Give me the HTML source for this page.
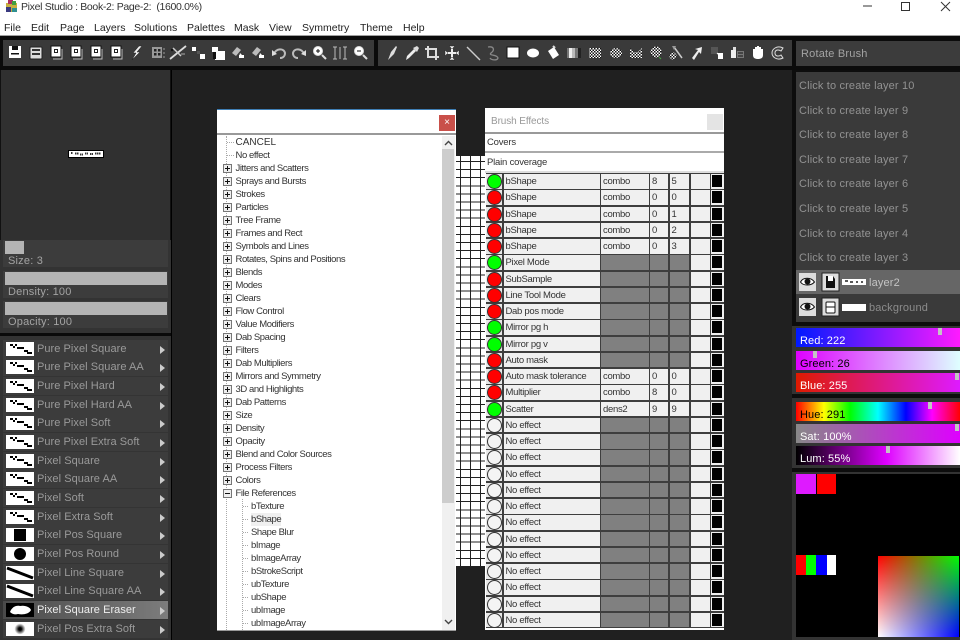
<!DOCTYPE html>
<html><head><meta charset="utf-8"><title>Pixel Studio</title>
<style>
html,body{margin:0;padding:0;background:#000}
body{width:960px;height:640px;position:relative;overflow:hidden;font-family:"Liberation Sans",sans-serif;font-size:12px;filter:blur(.3px)}
.a{position:absolute}
.t{position:absolute;white-space:pre;line-height:14px}
.menu span{position:absolute;top:20.500px;font-size:10.500px;line-height:14px;color:#222;white-space:pre}
.sl{position:absolute;left:5px;width:162px;height:13px;background:#b4b4b4}
.tr{position:absolute;left:3px;width:165px;height:27px;background:#3c3c3c}
.lb{position:absolute;left:8px;color:#a3a3a3;font-size:11px;line-height:14px;letter-spacing:.2px;white-space:pre}
.bl{position:absolute;left:3px;width:165px;height:18px;background:#3c3c3c;border-bottom:1px solid #343434;box-sizing:content-box;color:#9a9a9a;line-height:18px;white-space:pre;font-size:11px}
.bl em{font-style:normal;position:absolute;left:34px;top:0;letter-spacing:.05px}
.bl svg{position:absolute;left:3px;top:2px}
.bl i{position:absolute;left:157px;top:6px;width:0;height:0;border-left:5px solid #ccc;border-top:4.500px solid transparent;border-bottom:4.500px solid transparent}
.bl.on{background:linear-gradient(90deg,#4a4a4a,#7c7c7c)}
.bl.on em{color:#eee}
.tree{position:absolute;left:0;top:26px;width:225px;font-size:9.500px;letter-spacing:-.42px;color:#333}
.tree div{position:absolute;height:13px;line-height:13px;white-space:pre}
.tree .p{left:18.500px}
.tree .c{left:34px}
.tree .b{position:absolute;width:7px;height:7px;border:1px solid #777;left:5.500px;background:#eee;box-sizing:content-box}
.tree .b:before{content:"";position:absolute;left:1px;top:3px;width:5px;height:1px;background:#111}
.tree .b.x:after{content:"";position:absolute;left:3px;top:1px;width:1px;height:5px;background:#111}
.r{height:16.260px;position:relative;background:#3e3e3e}
.r span{position:absolute;top:1px;height:14.600px;background:#f0f0f0;font-size:9.500px;letter-spacing:-.3px;line-height:16px;color:#333;white-space:pre;text-indent:2px}
.r .d{left:0;width:16px;background:#e8e8e8}
.r .d:before{content:"";position:absolute;left:1px;top:0;width:13px;height:13px;border-radius:50%;border:1px solid #333;background:#f4f4f4}
.r.G .d:before{background:#0f0}
.r.R .d:before{background:#f00}
.r .n{left:17.500px;width:96px}
.r .m{left:115px;width:47.500px}
.r .v1{left:164px;width:17.500px}
.r .v2{left:183.500px;width:19.500px}
.r .bk{left:204.500px;width:19px}
.r .sw{left:225px;width:13px;background:#f0f0f0}
.r .sw:before{content:"";position:absolute;left:1px;top:1px;width:10px;height:12px;background:#000}
.r .y{background:#808080}
.ly{position:absolute;left:799px;color:#929292;font-size:11px;line-height:14px;letter-spacing:.15px;white-space:pre}
.bar{position:absolute;left:796px;width:164px;height:19px;line-height:24px;color:#fff;white-space:pre}
.bar em{font-style:normal;position:absolute;left:4px;top:0;font-size:11px;line-height:26px;letter-spacing:.1px}
.bar i{position:absolute;top:0;width:4px;height:7px;background:#c4c4c4}
</style></head><body>

<!-- title + menu -->
<div class="a" style="left:0;top:0;width:960px;height:35px;background:#fff"></div>
<svg class="a" style="left:4px;top:0" width="15" height="13" viewBox="0 0 15 13">
<rect x="2" y="3" width="11" height="9" fill="#c8b040"/><rect x="4" y="0" width="5" height="4" fill="#b03060"/><rect x="8" y="1" width="4" height="4" fill="#40a040"/><rect x="2" y="7" width="5" height="5" fill="#3a3a80"/><rect x="8" y="8" width="5" height="4" fill="#309090"/></svg>
<div class="t" style="left:21px;top:0;color:#333;font-size:10.500px;letter-spacing:-.33px">Pixel Studio : Book-2: Page-2:  (1600.0%)</div>
<div class="menu">
<span style="left:4px">File</span><span style="left:31px">Edit</span><span style="left:60px">Page</span><span style="left:94px">Layers</span><span style="left:134px">Solutions</span><span style="left:187px">Palettes</span><span style="left:234px">Mask</span><span style="left:269px">View</span><span style="left:302px">Symmetry</span><span style="left:360px">Theme</span><span style="left:403px">Help</span>
</div>
<svg class="a" style="left:860px;top:0" width="100" height="14"><path d="M3 6H12" stroke="#333" stroke-width="1"/><rect x="41.500" y="2.500" width="8" height="8" fill="none" stroke="#333"/><path d="M81 2L90 11M90 2L81 11" stroke="#333" fill="none"/></svg>
<div class="a" style="left:0;top:35px;width:960px;height:1px;background:#a0a0a0"></div>

<!-- toolbars -->
<div class="a" style="left:0;top:36px;width:960px;height:34px;background:#0b0b0b"></div>
<div class="a" style="left:3px;top:40px;width:371px;height:26px;background:#3a3a3a"></div>
<div class="a" style="left:378px;top:40px;width:414px;height:26px;background:#3a3a3a"></div>
<div class="a" style="left:796px;top:41px;width:164px;height:25px;background:#3c3c3c"></div>
<div class="t" style="left:801px;top:47px;color:#a3a3a3;font-size:11px;letter-spacing:.2px">Rotate Brush</div>

<svg class="a" style="left:0;top:36px" width="792" height="34" viewBox="0 36 792 34">
<defs>
<pattern id="ck" width="3" height="3" patternUnits="userSpaceOnUse"><rect width="3" height="3" fill="#fff"/><rect width="1.500" height="1.500" fill="#111"/><rect x="1.500" y="1.500" width="1.500" height="1.500" fill="#111"/></pattern>
<g id="pg"><rect x="-5" y="-6" width="10" height="11" fill="#fff" stroke="#111"/><path d="M6 -3V7H-3" fill="none" stroke="#bbb"/><rect x="-2" y="-3" width="4" height="4" fill="#222"/><rect x="-1" y="-2" width="2" height="2" fill="#fff"/></g>
<g id="ar"><path d="M-6 1L-1-5L3-2L-2 4Z" fill="#bbb"/><path d="M2 1L6 5H1Z" fill="#fff"/><rect x="1" y="3" width="5" height="3" fill="#fff"/></g>
</defs>
<!-- group 1 -->
<g transform="translate(15,52)"><rect x="-6" y="-6" width="12" height="12" fill="#fff"/><rect x="-3" y="-6" width="6" height="4" fill="#111"/><rect x="-4" y="1" width="8" height="1.500" fill="#111"/></g>
<g transform="translate(36,53)"><rect x="-6" y="-6" width="12" height="12" rx="1" fill="#ddd" stroke="#222"/><path d="M-4-3H4M-4 1H4" stroke="#333" stroke-width="2"/></g>
<use href="#pg" x="56" y="52"/><use href="#pg" x="76" y="52"/><use href="#pg" x="96" y="52"/><use href="#pg" x="116" y="52"/>
<g transform="translate(136,53)"><path d="M3-7L-3 0H0L-4 7L4-1H1L6-7Z" fill="#eee" stroke="#222" stroke-width=".5"/></g>
<g transform="translate(157,53)"><rect x="-5" y="-6" width="10" height="11" fill="#999"/><rect x="-3" y="-4" width="2.500" height="2.500" fill="#222"/><rect x="1" y="-4" width="2.500" height="2.500" fill="#222"/><rect x="-3" y="0" width="2.500" height="2.500" fill="#222"/><rect x="1" y="0" width="2.500" height="2.500" fill="#222"/><path d="M6-4H8M6 0H8M6 4H8" stroke="#999"/></g>
<g transform="translate(178,53)"><path d="M-8 6L8-7" stroke="#ddd" stroke-width="1.800"/><path d="M-5-5L3 3" stroke="#ccc" stroke-width="1.500"/><path d="M3 1L7 1" stroke="#aaa"/><circle cx="-6" cy="-3" r="1.200" fill="#111"/></g>
<g transform="translate(198,52)"><rect x="-6" y="-5" width="4" height="4" fill="#fff"/><rect x="-1" y="-1" width="3" height="3" fill="#555"/><rect x="2" y="2" width="5" height="5" fill="#fff"/></g>
<g transform="translate(218,53)"><rect x="-6" y="-6" width="6" height="5" fill="#fff"/><rect x="-3" y="-2" width="10" height="9" fill="#fff"/><rect x="-5" y="-1" width="3" height="7" fill="#111"/></g>
<use href="#ar" x="238" y="52"/><use href="#ar" x="258" y="52"/>
<g transform="translate(279,53)"><path d="M-5 1C-3-5 5-5 6 0C6 3 4 5 1 5" fill="none" stroke="#bbb" stroke-width="2"/><path d="M-7-3L-2 1L-7 3Z" fill="#ddd"/></g>
<g transform="translate(299,53)"><path d="M5 1C3-5-5-5-6 0C-6 3-4 5-1 5" fill="none" stroke="#bbb" stroke-width="2"/><path d="M7-3L2 1L7 3Z" fill="#ddd"/></g>
<g transform="translate(319,52)"><circle cx="-1" cy="-1" r="4.500" fill="#fff" stroke="#ddd"/><path d="M-3-1H1M-1-3V1" stroke="#111"/><path d="M3 3L7 7" stroke="#ddd" stroke-width="2"/></g>
<g transform="translate(340,53)"><path d="M-5-6V6M0-6V6M5-6V6M-7-6H-3M-7 6H-3M3-6H7M3 6H7" stroke="#bbb" fill="none"/></g>
<g transform="translate(360,52)"><circle cx="-1" cy="-1" r="4.500" fill="#fff" stroke="#ddd"/><path d="M-3-1H1" stroke="#111"/><path d="M3 3L7 7" stroke="#ddd" stroke-width="2"/></g>
<!-- group 2 -->
<g transform="translate(392,53)"><path d="M-4 7L-1-1L4-7L5-6L2 1Z" fill="#ddd"/></g>
<g transform="translate(412,53)"><path d="M-6 7L-5 3L2-4L4-2L-3 5Z" fill="#eee"/><path d="M1-5L5-7L7-5L5-1Z" fill="#ddd"/></g>
<g transform="translate(432,53)"><path d="M-4-7V4H7" fill="none" stroke="#ddd" stroke-width="2"/><path d="M-7-4H4V7" fill="none" stroke="#ddd" stroke-width="2"/></g>
<g transform="translate(452,53)"><path d="M-7 0H7M0-7V7" stroke="#eee" stroke-width="2"/><path d="M-7-3L-7 3L-4 0ZM7-3L7 3L4 0ZM-3-7L3-7L0-4ZM-3 7L3 7L0 4Z" fill="#eee" stroke="#222" stroke-width=".5"/></g>
<path d="M467 47L480 60" stroke="#ccc" stroke-width="1.400"/>
<path d="M488 47C494 46 495 50 491 53C488 56 497 54 498 58C497 61 491 60 490 58" fill="none" stroke="#888" stroke-width="1.300"/>
<rect x="507" y="47" width="12" height="11" fill="#fff" stroke="#111"/>
<ellipse cx="533" cy="53" rx="6" ry="4.500" fill="#fff"/>
<g transform="translate(553,53)"><path d="M-5-2L1-6L6 2L0 6Z" fill="#fff"/><path d="M0-7L2-5" stroke="#ddd" stroke-width="2"/></g>
<g transform="translate(574,53)"><rect x="-7" y="-5" width="14" height="10" fill="#777"/><rect x="-5" y="-5" width="3" height="10" fill="#eee"/><rect x="-2" y="-5" width="3" height="10" fill="#bbb"/><rect x="4" y="-5" width="3" height="10" fill="#222"/></g>
<rect x="589" y="48" width="12" height="10" fill="url(#ck)"/>
<ellipse cx="616" cy="53" rx="6" ry="5" fill="url(#ck)"/>
<path d="M630 48L634 52L638 52L642 48V58H630Z" fill="url(#ck)"/>
<circle cx="656" cy="52" r="5.500" fill="url(#ck)"/><path d="M659 57L661 59" stroke="#4a4"/>
<g transform="translate(676,53)"><circle cx="-3" cy="3" r="3.500" fill="url(#ck)"/><path d="M-2-6L6 5" stroke="#ccc" stroke-width="1.500"/><path d="M-4-7H0L-2-3Z" fill="#999"/></g>
<g transform="translate(696,53)"><path d="M-4 5L2-3L-1-4L6-6L5 1L3-1L-2 7Z" fill="#eee"/></g>
<g transform="translate(717,53)"><rect x="-6" y="-6" width="7" height="7" fill="#555"/><rect x="1" y="0" width="5" height="6" fill="#fff"/><path d="M0 0L3 3" stroke="#fff"/></g>
<g transform="translate(737,53)"><rect x="-6" y="-3" width="5" height="8" fill="#eee"/><rect x="-4" y="-6" width="3" height="3" fill="#ddd"/><rect x="0" y="-2" width="7" height="7" fill="#777"/><path d="M1 0H6M1 3H6" stroke="#111"/></g>
<g transform="translate(758,53)"><path d="M-5-2V-4H-3V-6H-1V-7H1V-6H3V-4H5V2C5 5 3 6 0 6C-3 6-5 5-5 2Z" fill="#fff"/></g>
<g transform="translate(778,53)"><path d="M5-5C-1-8-6-4-6 0C-6 4-1 8 5 5L3 2C0 4-3 3-3 0C-3-3 0-4 3-2Z" fill="#444" stroke="#ddd"/></g>
</svg>

<!-- left panel -->
<div class="a" style="left:0;top:70px;width:171px;height:570px;background:#111"></div>
<div class="a" style="left:1px;top:70px;width:169px;height:170px;background:#303030"></div>
<svg class="a" style="left:68px;top:150px" width="36" height="8"><rect width="36" height="8" fill="#000"/><rect x="1" y="1" width="34" height="6" fill="#fff"/><path d="M3 3H5M7 3.500H11M12 4.500H15M17 3.500H20M22 4H25M27 3.500H33" stroke="#333" stroke-width="2" stroke-dasharray="1.500 .5"/></svg>

<div class="a" style="left:0;top:240px;width:171px;height:93px;background:#333"></div>
<div class="tr" style="top:240px"></div><div class="sl" style="top:241px;width:19px"></div>
<div class="lb" style="top:254px">Size: 3</div>
<div class="tr" style="top:271px"></div><div class="sl" style="top:272px"></div>
<div class="lb" style="top:285px">Density: 100</div>
<div class="tr" style="top:301px"></div><div class="sl" style="top:302px"></div>
<div class="lb" style="top:315px">Opacity: 100</div>
<div class="a" style="left:0;top:333px;width:171px;height:3px;background:#0a0a0a"></div>
<div class="a" style="left:0;top:336px;width:171px;height:304px;background:#333"></div>

<svg width="0" height="0" style="position:absolute"><defs>
<symbol id="st" viewBox="0 0 28 14"><rect width="28" height="14" fill="#fff"/><path d="M4 2H7V4H9V2H11V4H9V6H7V4H4ZM11 5H18V7H11ZM18 8H22V10H18ZM21 10H26V12H21Z" fill="#000"/></symbol>
<radialGradient id="sf"><stop offset=".25" stop-color="#000"/><stop offset="1" stop-color="#fff"/></radialGradient>
</defs></svg>

<div class="bl" style="top:339.500px"><svg width="28" height="14"><use href="#st"/></svg><em>Pure Pixel Square</em><i></i></div>
<div class="bl" style="top:358.200px"><svg width="28" height="14"><use href="#st"/></svg><em>Pure Pixel Square AA</em><i></i></div>
<div class="bl" style="top:376.800px"><svg width="28" height="14"><use href="#st"/></svg><em>Pure Pixel Hard</em><i></i></div>
<div class="bl" style="top:395.500px"><svg width="28" height="14"><use href="#st"/></svg><em>Pure Pixel Hard AA</em><i></i></div>
<div class="bl" style="top:414.200px"><svg width="28" height="14"><use href="#st"/></svg><em>Pure Pixel Soft</em><i></i></div>
<div class="bl" style="top:432.800px"><svg width="28" height="14"><use href="#st"/></svg><em>Pure Pixel Extra Soft</em><i></i></div>
<div class="bl" style="top:451.500px"><svg width="28" height="14"><use href="#st"/></svg><em>Pixel Square</em><i></i></div>
<div class="bl" style="top:470.200px"><svg width="28" height="14"><use href="#st"/></svg><em>Pixel Square AA</em><i></i></div>
<div class="bl" style="top:488.800px"><svg width="28" height="14"><use href="#st"/></svg><em>Pixel Soft</em><i></i></div>
<div class="bl" style="top:507.500px"><svg width="28" height="14"><use href="#st"/></svg><em>Pixel Extra Soft</em><i></i></div>
<div class="bl" style="top:526.200px"><svg width="28" height="14"><rect width="28" height="14" fill="#fff"/><rect x="8" y="1" width="12" height="12" fill="#000"/></svg><em>Pixel Pos Square</em><i></i></div>
<div class="bl" style="top:544.800px"><svg width="28" height="14"><rect width="28" height="14" fill="#fff"/><circle cx="14" cy="7" r="6" fill="#000"/></svg><em>Pixel Pos Round</em><i></i></div>
<div class="bl" style="top:563.500px"><svg width="28" height="14"><rect width="28" height="14" fill="#fff"/><path d="M1 2L27 12" stroke="#000" stroke-width="3"/></svg><em>Pixel Line Square</em><i></i></div>
<div class="bl" style="top:582.200px"><svg width="28" height="14"><rect width="28" height="14" fill="#fff"/><path d="M1 2L27 12" stroke="#000" stroke-width="3"/></svg><em>Pixel Line Square AA</em><i></i></div>
<div class="bl on" style="top:600.800px"><svg width="28" height="14"><rect width="28" height="14" fill="#000"/><path d="M4 9C6 4 10 2 14 3C19 2 24 4 25 7C23 11 17 12 12 11C9 12 6 11 4 9Z" fill="#fff"/></svg><em>Pixel Square Eraser</em><i></i></div>
<div class="bl" style="top:619.500px"><svg width="28" height="14"><rect width="28" height="14" fill="#fff"/><circle cx="14" cy="7" r="5.500" fill="url(#sf)"/></svg><em>Pixel Pos Extra Soft</em><i></i></div>

<!-- canvas -->
<div class="a" style="left:172px;top:70px;width:620px;height:570px;background:#202020"></div>
<div class="a" style="left:456px;top:156px;width:30px;height:411px;background-color:#fff;background-image:repeating-linear-gradient(90deg,transparent 0 4px,#222 4px 5px,transparent 5px 10px),repeating-linear-gradient(0deg,#222 0 1px,transparent 1px 8.100px)"></div>

<!-- dialog 1 -->
<div class="a" style="left:217px;top:109px;width:239px;height:521px;background:#fff;border-top:1px solid #3f7fb5;box-sizing:border-box;box-shadow:0 1px 0 #999">
 <div class="a" style="left:222px;top:5px;width:16px;height:16px;background:#c9504a;color:#fff;font-size:10px;line-height:16px;text-align:center">×</div>
 <div class="a" style="left:0;top:23px;width:239px;height:1.500px;background:#999"></div>
 <div class="a" style="left:225px;top:26px;width:13px;height:494px;background:#f0f0f0"></div>
 <div class="a" style="left:225px;top:39px;width:12px;height:354px;background:#cdcdcd"></div>
 <svg class="a" style="left:226px;top:29px" width="11" height="8"><path d="M2 6L5.500 2.500L9 6" fill="none" stroke="#444" stroke-width="1.400"/></svg>
 <svg class="a" style="left:226px;top:508px" width="11" height="8"><path d="M2 2L5.500 5.500L9 2" fill="none" stroke="#444" stroke-width="1.400"/></svg>
 <div class="a" style="left:9px;top:26px;width:0;height:494px;border-left:1px dotted #aaa"></div>
 <div class="a" style="left:25px;top:389px;width:0;height:131px;border-left:1px dotted #aaa"></div>
 <svg class="a" style="left:9px;top:26px" width="30" height="495">
  <path d="M1 6.500H8M1 19.500H8" stroke="#aaa" stroke-dasharray="1 1"/>
  <path d="M17 370.500H23M17 383.500H23M17 396.500H23M17 409.500H23M17 422.500H23M17 435.500H23M17 448.500H23M17 461.500H23M17 474.500H23M17 487.500H23" stroke="#aaa" stroke-dasharray="1 1"/>
 </svg>
 <div class="tree">
  <div class="p" style="top:0;font-size:10px;letter-spacing:0">CANCEL</div>
  <div class="p" style="top:13px">No effect</div>
  <span class="b x" style="position:absolute;top:28px"></span><div class="p" style="top:26px">Jitters and Scatters</div>
  <span class="b x" style="position:absolute;top:41px"></span><div class="p" style="top:39px">Sprays and Bursts</div>
  <span class="b x" style="position:absolute;top:54px"></span><div class="p" style="top:52px">Strokes</div>
  <span class="b x" style="position:absolute;top:67px"></span><div class="p" style="top:65px">Particles</div>
  <span class="b x" style="position:absolute;top:80px"></span><div class="p" style="top:78px">Tree Frame</div>
  <span class="b x" style="position:absolute;top:93px"></span><div class="p" style="top:91px">Frames and Rect</div>
  <span class="b x" style="position:absolute;top:106px"></span><div class="p" style="top:104px">Symbols and Lines</div>
  <span class="b x" style="position:absolute;top:119px"></span><div class="p" style="top:117px">Rotates, Spins and Positions</div>
  <span class="b x" style="position:absolute;top:132px"></span><div class="p" style="top:130px">Blends</div>
  <span class="b x" style="position:absolute;top:145px"></span><div class="p" style="top:143px">Modes</div>
  <span class="b x" style="position:absolute;top:158px"></span><div class="p" style="top:156px">Clears</div>
  <span class="b x" style="position:absolute;top:171px"></span><div class="p" style="top:169px">Flow Control</div>
  <span class="b x" style="position:absolute;top:184px"></span><div class="p" style="top:182px">Value Modifiers</div>
  <span class="b x" style="position:absolute;top:197px"></span><div class="p" style="top:195px">Dab Spacing</div>
  <span class="b x" style="position:absolute;top:210px"></span><div class="p" style="top:208px">Filters</div>
  <span class="b x" style="position:absolute;top:223px"></span><div class="p" style="top:221px">Dab Multipliers</div>
  <span class="b x" style="position:absolute;top:236px"></span><div class="p" style="top:234px">Mirrors and Symmetry</div>
  <span class="b x" style="position:absolute;top:249px"></span><div class="p" style="top:247px">3D and Highlights</div>
  <span class="b x" style="position:absolute;top:262px"></span><div class="p" style="top:260px">Dab Patterns</div>
  <span class="b x" style="position:absolute;top:275px"></span><div class="p" style="top:273px">Size</div>
  <span class="b x" style="position:absolute;top:288px"></span><div class="p" style="top:286px">Density</div>
  <span class="b x" style="position:absolute;top:301px"></span><div class="p" style="top:299px">Opacity</div>
  <span class="b x" style="position:absolute;top:314px"></span><div class="p" style="top:312px">Blend and Color Sources</div>
  <span class="b x" style="position:absolute;top:327px"></span><div class="p" style="top:325px">Process Filters</div>
  <span class="b x" style="position:absolute;top:340px"></span><div class="p" style="top:338px">Colors</div>
  <span class="b" style="position:absolute;top:353px"></span><div class="p" style="top:351px">File References</div>
  <div class="c" style="top:364px">bTexture</div>
  <div class="c" style="top:377px;background:#f0f0f0">bShape</div>
  <div class="c" style="top:390px">Shape Blur</div>
  <div class="c" style="top:403px">bImage</div>
  <div class="c" style="top:416px">bImageArray</div>
  <div class="c" style="top:429px">bStrokeScript</div>
  <div class="c" style="top:442px">ubTexture</div>
  <div class="c" style="top:455px">ubShape</div>
  <div class="c" style="top:468px">ubImage</div>
  <div class="c" style="top:481px">ubImageArray</div>
 </div>
</div>

<!-- dialog 2 -->
<div class="a" style="left:485px;top:108px;width:239px;height:522px;background:#fff">
 <div class="t" style="left:6px;top:7px;color:#999;font-size:10px;letter-spacing:-.1px">Brush Effects</div>
 <div class="a" style="left:222px;top:6px;width:16px;height:16px;background:#e4e4e4"></div>
 <div class="a" style="left:0;top:24px;width:239px;height:1.500px;background:#999"></div>
 <div class="t" style="left:2px;top:27.500px;color:#333;font-size:9.500px;letter-spacing:-.2px">Covers</div>
 <div class="a" style="left:0;top:43px;width:239px;height:1.500px;background:#aaa"></div>
 <div class="t" style="left:2px;top:48px;color:#333;font-size:9.500px;letter-spacing:-.2px">Plain coverage</div>
 <div class="a" style="left:0;top:63px;width:239px;height:1.500px;background:#ddd"></div>
 <div class="a" style="left:1px;top:65px;width:238px">
  <div class="r G"><span class="d"></span><span class="n">bShape</span><span class="m">combo</span><span class="v1">8</span><span class="v2">5</span><span class="bk"></span><span class="sw"></span></div>
  <div class="r R"><span class="d"></span><span class="n">bShape</span><span class="m">combo</span><span class="v1">0</span><span class="v2">0</span><span class="bk"></span><span class="sw"></span></div>
  <div class="r R"><span class="d"></span><span class="n">bShape</span><span class="m">combo</span><span class="v1">0</span><span class="v2">1</span><span class="bk"></span><span class="sw"></span></div>
  <div class="r R"><span class="d"></span><span class="n">bShape</span><span class="m">combo</span><span class="v1">0</span><span class="v2">2</span><span class="bk"></span><span class="sw"></span></div>
  <div class="r R"><span class="d"></span><span class="n">bShape</span><span class="m">combo</span><span class="v1">0</span><span class="v2">3</span><span class="bk"></span><span class="sw"></span></div>
  <div class="r G"><span class="d"></span><span class="n">Pixel Mode</span><span class="m y"></span><span class="v1 y"></span><span class="v2 y"></span><span class="bk"></span><span class="sw"></span></div>
  <div class="r R"><span class="d"></span><span class="n">SubSample</span><span class="m y"></span><span class="v1 y"></span><span class="v2 y"></span><span class="bk"></span><span class="sw"></span></div>
  <div class="r R"><span class="d"></span><span class="n">Line Tool Mode</span><span class="m y"></span><span class="v1 y"></span><span class="v2 y"></span><span class="bk"></span><span class="sw"></span></div>
  <div class="r R"><span class="d"></span><span class="n">Dab pos mode</span><span class="m y"></span><span class="v1 y"></span><span class="v2 y"></span><span class="bk"></span><span class="sw"></span></div>
  <div class="r G"><span class="d"></span><span class="n">Mirror pg h</span><span class="m y"></span><span class="v1 y"></span><span class="v2 y"></span><span class="bk"></span><span class="sw"></span></div>
  <div class="r G"><span class="d"></span><span class="n">Mirror pg v</span><span class="m y"></span><span class="v1 y"></span><span class="v2 y"></span><span class="bk"></span><span class="sw"></span></div>
  <div class="r R"><span class="d"></span><span class="n">Auto mask</span><span class="m y"></span><span class="v1 y"></span><span class="v2 y"></span><span class="bk"></span><span class="sw"></span></div>
  <div class="r R"><span class="d"></span><span class="n">Auto mask tolerance</span><span class="m">combo</span><span class="v1">0</span><span class="v2">0</span><span class="bk"></span><span class="sw"></span></div>
  <div class="r R"><span class="d"></span><span class="n">Multiplier</span><span class="m">combo</span><span class="v1">8</span><span class="v2">0</span><span class="bk"></span><span class="sw"></span></div>
  <div class="r G"><span class="d"></span><span class="n">Scatter</span><span class="m">dens2</span><span class="v1">9</span><span class="v2">9</span><span class="bk"></span><span class="sw"></span></div>
  <div class="r"><span class="d"></span><span class="n">No effect</span><span class="m y"></span><span class="v1 y"></span><span class="v2 y"></span><span class="bk"></span><span class="sw"></span></div>
  <div class="r"><span class="d"></span><span class="n">No effect</span><span class="m y"></span><span class="v1 y"></span><span class="v2 y"></span><span class="bk"></span><span class="sw"></span></div>
  <div class="r"><span class="d"></span><span class="n">No effect</span><span class="m y"></span><span class="v1 y"></span><span class="v2 y"></span><span class="bk"></span><span class="sw"></span></div>
  <div class="r"><span class="d"></span><span class="n">No effect</span><span class="m y"></span><span class="v1 y"></span><span class="v2 y"></span><span class="bk"></span><span class="sw"></span></div>
  <div class="r"><span class="d"></span><span class="n">No effect</span><span class="m y"></span><span class="v1 y"></span><span class="v2 y"></span><span class="bk"></span><span class="sw"></span></div>
  <div class="r"><span class="d"></span><span class="n">No effect</span><span class="m y"></span><span class="v1 y"></span><span class="v2 y"></span><span class="bk"></span><span class="sw"></span></div>
  <div class="r"><span class="d"></span><span class="n">No effect</span><span class="m y"></span><span class="v1 y"></span><span class="v2 y"></span><span class="bk"></span><span class="sw"></span></div>
  <div class="r"><span class="d"></span><span class="n">No effect</span><span class="m y"></span><span class="v1 y"></span><span class="v2 y"></span><span class="bk"></span><span class="sw"></span></div>
  <div class="r"><span class="d"></span><span class="n">No effect</span><span class="m y"></span><span class="v1 y"></span><span class="v2 y"></span><span class="bk"></span><span class="sw"></span></div>
  <div class="r"><span class="d"></span><span class="n">No effect</span><span class="m y"></span><span class="v1 y"></span><span class="v2 y"></span><span class="bk"></span><span class="sw"></span></div>
  <div class="r"><span class="d"></span><span class="n">No effect</span><span class="m y"></span><span class="v1 y"></span><span class="v2 y"></span><span class="bk"></span><span class="sw"></span></div>
  <div class="r"><span class="d"></span><span class="n">No effect</span><span class="m y"></span><span class="v1 y"></span><span class="v2 y"></span><span class="bk"></span><span class="sw"></span></div>
  <div class="r"><span class="d"></span><span class="n">No effect</span><span class="m y"></span><span class="v1 y"></span><span class="v2 y"></span><span class="bk"></span><span class="sw"></span></div>
 </div>
</div>

<!-- right panel -->
<div class="a" style="left:792px;top:70px;width:168px;height:570px;background:#0d0d0d"></div>
<div class="a" style="left:796px;top:72px;width:164px;height:250px;background:#3a3a3a"></div>
<div class="ly" style="top:79px">Click to create layer 10</div>
<div class="ly" style="top:104px">Click to create layer 9</div>
<div class="ly" style="top:128px">Click to create layer 8</div>
<div class="ly" style="top:153px">Click to create layer 7</div>
<div class="ly" style="top:177px">Click to create layer 6</div>
<div class="ly" style="top:202px">Click to create layer 5</div>
<div class="ly" style="top:227px">Click to create layer 4</div>
<div class="ly" style="top:251px">Click to create layer 3</div>
<div class="a" style="left:796px;top:270px;width:164px;height:24px;background:#666"></div>
<svg class="a" style="left:798px;top:272px" width="72" height="46">
 <rect x="1" y="1" width="17" height="18" fill="#ddd"/><path d="M2.500 10C5 5 13 5 16.500 10C13 14 5 14 2.500 10Z" fill="#fff" stroke="#111"/><circle cx="9.500" cy="9.500" r="3" fill="#111"/>
 <rect x="24" y="1" width="17" height="18" fill="#ddd" stroke="#222"/><path d="M28 4H35L37 7V16H28Z" fill="#111"/><rect x="30" y="4" width="5" height="5" fill="#fff"/>
 <rect x="44" y="7" width="24" height="6" fill="#fff"/><path d="M47 9H50M52 10H55M58 10H60M63 10H65" stroke="#222" stroke-width="1.500"/>
 <rect x="1" y="26" width="17" height="18" fill="#ddd"/><path d="M2.500 35C5 30 13 30 16.500 35C13 39 5 39 2.500 35Z" fill="#fff" stroke="#111"/><circle cx="9.500" cy="34.500" r="3" fill="#111"/>
 <rect x="24" y="26" width="17" height="18" fill="#ddd" stroke="#222"/><rect x="28" y="30" width="9" height="11" rx="1" fill="#fff" stroke="#111"/><path d="M28 35H37" stroke="#111"/>
 <rect x="44" y="32" width="24" height="7" fill="#fff"/>
</svg>
<div class="ly" style="left:869px;top:276px;color:#c4c4c4">layer2</div>
<div class="ly" style="left:869px;top:301px;color:#8c8c8c">background</div>

<div class="a" style="left:792px;top:326px;width:168px;height:68px;background:#333"></div>
<div class="bar" style="top:328px;background:linear-gradient(90deg,#001aff,#ff1aff);"><em>Red: 222</em><i style="left:142px"></i></div>
<div class="bar" style="top:350.500px;background:linear-gradient(90deg,#de00ff,#deffff);color:#000"><em>Green: 26</em><i style="left:17px"></i></div>
<div class="bar" style="top:373px;background:linear-gradient(90deg,#de1a00,#de1aff)"><em>Blue: 255</em><i style="left:159px"></i></div>
<div class="a" style="left:792px;top:398px;width:168px;height:70px;background:#333"></div>
<div class="bar" style="top:402px;background:linear-gradient(90deg,#f00,#ff0 17%,#0f0 33%,#0ff 50%,#00f 67%,#f0f 83%,#f00);color:#000"><em>Hue: 291</em><i style="left:132px"></i></div>
<div class="bar" style="top:424px;background:linear-gradient(90deg,#888,#de00ff)"><em>Sat: 100%</em><i style="left:159px"></i></div>
<div class="bar" style="top:446px;background:linear-gradient(90deg,#000,#de00ff 55%,#fff)"><em>Lum: 55%</em><i style="left:90px"></i></div>

<div class="a" style="left:792px;top:472px;width:168px;height:168px;background:#333"></div>
<div class="a" style="left:796px;top:474px;width:164px;height:163px;background:#000"></div>
<div class="a" style="left:796px;top:474px;width:20px;height:20px;background:#de1aff"></div>
<div class="a" style="left:817px;top:474px;width:19px;height:20px;background:#f00"></div>
<div class="a" style="left:796px;top:555px;width:10px;height:20px;background:#f00"></div>
<div class="a" style="left:806px;top:555px;width:10px;height:20px;background:#0f0"></div>
<div class="a" style="left:816px;top:555px;width:11px;height:20px;background:#00f"></div>
<div class="a" style="left:827px;top:555px;width:9px;height:20px;background:#fff"></div>
<div class="a" style="left:878px;top:556px;width:81px;height:81px;background:linear-gradient(90deg,#fff,#00f)"></div>
<div class="a" style="left:878px;top:556px;width:81px;height:81px;background:linear-gradient(90deg,#f00,#0f0);-webkit-mask-image:linear-gradient(180deg,#000,transparent);mask-image:linear-gradient(180deg,#000,transparent)"></div>
</body></html>
